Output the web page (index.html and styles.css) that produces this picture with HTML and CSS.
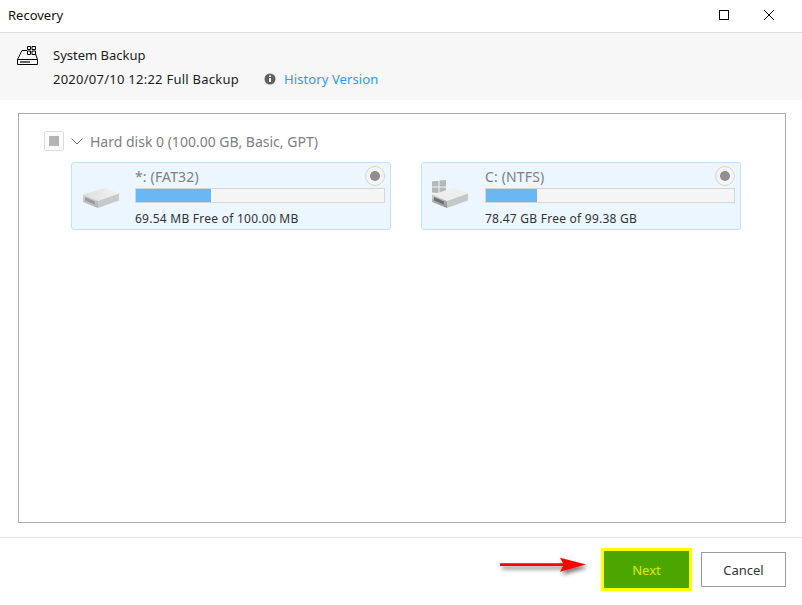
FILE: index.html
```html
<!DOCTYPE html>
<html lang="en">
<head>
<meta charset="utf-8">
<title>Recovery</title>
<link rel="stylesheet" href="styles.css">
</head>
<body>
<div class="window">
  <header class="titlebar">
    <span class="title">Recovery</span>
    <div class="winctl">
      <svg class="ctl" width="12" height="12" viewBox="0 0 12 12"><rect x="1.5" y="1.5" width="9" height="9" fill="none" stroke="#000" stroke-width="1"/></svg>
      <svg class="ctl" width="12" height="12" viewBox="0 0 12 12"><path d="M1 1l10 10M11 1L1 11" fill="none" stroke="#000" stroke-width="1"/></svg>
    </div>
  </header>
  <section class="info">
    <svg class="info-icon" width="22" height="22" viewBox="0 0 22 22">
      <path d="M.5 14.500h20v5H.5zM.5 14.500L5 5.500h5M20.500 14.500L18.500 9" fill="none" stroke="#000" stroke-width="1"/>
      <path d="M3 17h10" stroke="#000" stroke-width="1.200"/>
      <path d="M10.500 1.500h3v3h-3zM15 1.500h3.500v3H15zM10.500 6h3v3.500h-3zM15 6h3.500v3.500H15z" fill="none" stroke="#000" stroke-width="1"/>
    </svg>
    <div class="info-text">
      <div class="info-name">System Backup</div>
      <div class="info-line">
        <span class="info-date">2020/07/10 12:22 Full Backup</span>
        <span class="history">
          <svg width="12" height="12" viewBox="0 0 12 12"><circle cx="6" cy="6" r="5.500" fill="#5f5f5f"/><rect x="5" y="5" width="2" height="4" fill="#fff"/><rect x="5" y="2.500" width="2" height="1.500" fill="#fff"/></svg>
          <a class="link">History Version</a>
        </span>
      </div>
    </div>
  </section>
  <main class="panel">
    <div class="disk-head">
      <span class="check"><span class="check-fill"></span></span>
      <svg class="chev" width="12" height="7" viewBox="0 0 12 7"><path d="M.5.500L6 6 11.500.500" fill="none" stroke="#666" stroke-width="1"/></svg>
      <span class="disk-name">Hard disk 0 (100.00 GB, Basic, GPT)</span>
    </div>
    <div class="parts">
      <article class="part">
        <svg class="drive" width="38" height="22" viewBox="0 0 38 22">
          <defs>
            <linearGradient id="top1" x1="0" y1="0" x2="1" y2="0"><stop offset="0" stop-color="#dedede"/><stop offset="1" stop-color="#f2f2f2"/></linearGradient>
            <linearGradient id="fr1" x1="0" y1="0" x2="0" y2="1"><stop offset="0" stop-color="#d6d6d6"/><stop offset="1" stop-color="#b0b0b0"/></linearGradient>
          </defs>
          <path d="M0 6.500L21.700 0 36 5.500 15 13z" fill="url(#top1)"/>
          <path d="M15 13L36 5.500V12.500L15 20z" fill="#c8caca"/>
          <path d="M0 6.500L15 13V20L0 14z" fill="url(#fr1)"/>
          <path d="M2 9L12 13.500V16.500L2 12.500z" fill="#989898"/>
        </svg>
        <div class="part-body">
          <div class="part-name">*: (FAT32)</div>
          <div class="bar"><div class="bar-fill bar-fat"></div></div>
          <div class="part-free">69.54 MB Free of 100.00 MB</div>
        </div>
        <span class="radio"><span class="radio-dot"></span></span>
      </article>
      <article class="part">
        <svg class="drive drive-win" width="38" height="30" viewBox="0 0 38 30">
          <defs>
            <linearGradient id="fr2" x1="0" y1="0" x2="0" y2="1"><stop offset="0" stop-color="#cfcfcf"/><stop offset="1" stop-color="#8e8e8e"/></linearGradient>
          </defs>
          <path d="M0 1.500L6.500 .700V6.500H0zM7.500 .500L14 0V6.500H7.500zM0 7.500H6.500V13.300L0 12.500zM7.500 7.500H14V14L7.500 13.500z" fill="#b6b8b8"/>
          <path d="M0 14.500L21.700 8 36 13.500 15 21z" fill="#eeeeee"/>
          <path d="M15 21L36 13.500V20.500L15 28z" fill="#c6c8c8"/>
          <path d="M0 14.500L15 21V28L0 22z" fill="url(#fr2)"/>
          <path d="M2 17L12 21.500V24.500L2 20.500z" fill="#6e6e6e"/>
        </svg>
        <div class="part-body">
          <div class="part-name">C: (NTFS)</div>
          <div class="bar"><div class="bar-fill bar-ntfs"></div></div>
          <div class="part-free">78.47 GB Free of 99.38 GB</div>
        </div>
        <span class="radio"><span class="radio-dot"></span></span>
      </article>
    </div>
  </main>
  <footer class="footer">
    <svg class="arrow" width="92" height="28" viewBox="0 0 92 28">
      <defs><filter id="sh" x="-10%" y="-60%" width="125%" height="260%"><feDropShadow dx="2" dy="3" stdDeviation="2" flood-color="#000" flood-opacity=".55"/></filter></defs>
      <path d="M1 11.300H64L61 5.700 87 12.500 61 19.700 64 14H1z" fill="#f00" filter="url(#sh)"/>
    </svg>
    <button class="btn btn-next">Next</button>
    <button class="btn btn-cancel">Cancel</button>
  </footer>
</div>
</body>
</html>
```
FILE: styles.css
```css
* { box-sizing: border-box; }
html, body { margin: 0; padding: 0; }
body { background: #fff; font-family: "Noto Sans", "Open Sans", sans-serif; font-size: 13px; color: #222; }
.window { width: 802px; height: 605px; display: flex; flex-direction: column; overflow: hidden; }
.titlebar { height: 33px; flex: none; display: flex; align-items: center; justify-content: space-between; padding: 0 27px 2px 8px; border-bottom: 1px solid #dedede; }
.title { font-size: 13px; color: #111; }
.winctl { display: flex; gap: 33px; align-items: center; }
.ctl { display: block; }
.info { height: 67px; flex: none; background: #f7f7f7; display: flex; padding: 12px 0 0 17px; }
.info-icon { display: block; flex: none; margin-right: 14px; }
.info-text { display: flex; flex-direction: column; gap: 6px; line-height: 18px; margin-top: 1px; }
.info-name, .info-line { color: #1c1c1c; }
.info-line { display: flex; }
.info-date { letter-spacing: .25px; }
.history { display: flex; align-items: center; gap: 8px; margin-left: 25px; }
.history svg { display: block; }
.link { color: #2b9af3; letter-spacing: .1px; }
.panel { flex: none; height: 410px; margin: 13px 16px 0 18px; border: 1px solid #ababab; padding: 16px 25px 0; background: #fff; }
.disk-head { display: flex; align-items: center; height: 22px; }
.check { width: 20px; height: 20px; border: 1px solid #dcdcdc; border-radius: 2px; display: flex; align-items: center; justify-content: center; background: #fbfbfb; }
.check-fill { width: 10px; height: 10px; background: #b4b4b4; }
.chev { margin: 0 7px 0 7px; display: block; }
.disk-name { font-size: 14px; color: #808080; }
.parts { display: flex; gap: 30px; margin: 10px 0 0 27px; }
.part { width: 320px; height: 68px; position: relative; display: flex; border: 1px solid #c3e2f8; border-radius: 3px; background: #ebf6fe; }
.drive { position: absolute; left: 11px; top: 25px; }
.drive-win { left: 10px; top: 17px; }
.part-body { margin-left: 63px; width: 250px; display: flex; flex-direction: column; }
.part-name { font-size: 14px; line-height: 18px; margin-top: 5px; color: #808080; letter-spacing: .15px; }
.bar { height: 15px; margin-top: 2px; border: 1px solid #d3d7da; background: #f5f5f5; }
.bar-fill { height: 100%; background: #6ab7f6; }
.bar-fat { width: 30.2%; }
.bar-ntfs { width: 20.6%; }
.part-free { font-size: 12px; line-height: 16px; margin-top: 8px; color: #333; letter-spacing: .25px; }
.radio { position: absolute; right: 5px; top: 3px; width: 20px; height: 20px; border-radius: 50%; border: 1px solid #d4d4d4; background: #f4f4f4; display: flex; align-items: center; justify-content: center; }
.radio-dot { width: 10px; height: 10px; border-radius: 50%; background: #8f8f8f; }
.footer { margin-top: 14px; border-top: 1px solid #e3e3e3; flex: 1; position: relative; display: flex; justify-content: flex-end; align-items: flex-start; padding: 10px 16px 0 0; gap: 9px; }
.btn { font-family: inherit; font-size: 13px; padding: 0; display: block; }
.btn-next { width: 91px; height: 43px; background: #4ca600; border: 3px solid #ff0; color: #e2e800; }
.btn-cancel { width: 85px; height: 35px; margin-top: 4px; background: #fff; border: 1px solid #999; color: #333; }
.arrow { position: absolute; left: 499px; top: 14px; }
```
